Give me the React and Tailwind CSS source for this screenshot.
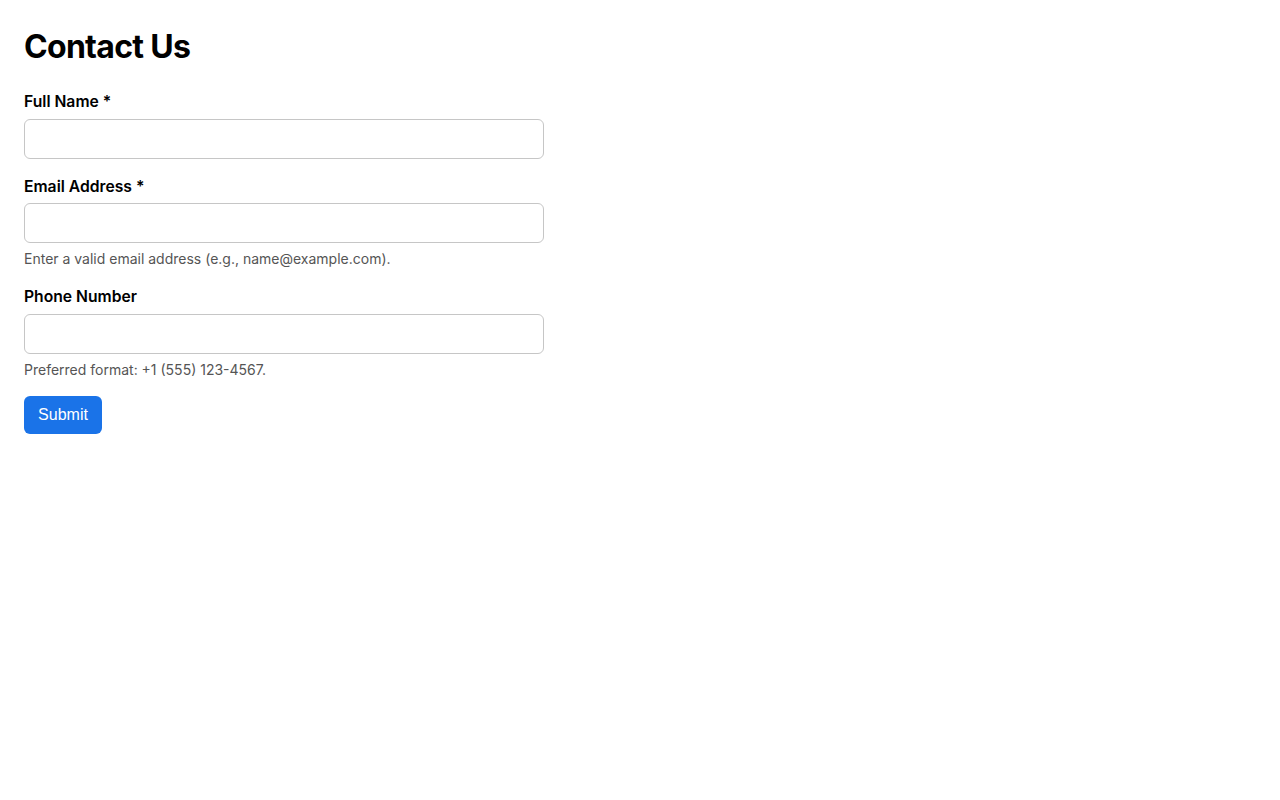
export default function App() {
  const font = { fontFamily: 'Inter, "Noto Sans", sans-serif' };
  return (
    <div className="min-h-screen bg-white px-6 pt-6 text-black" style={font}>
      <h1 className="mt-[3px] mb-6 text-[32px] leading-[40px] font-bold tracking-[-0.7px]">Contact Us</h1>
      <form className="flex w-[520px] flex-col" onSubmit={(e) => e.preventDefault()}>
        <div className="mb-4 flex flex-col">
          <label className="mb-1.5 text-[15.7px] leading-[22px] font-semibold">Full Name *</label>
          <input className="h-10 rounded-md border border-[#c6c6c6] px-3 text-[15px] outline-none" />
        </div>
        <div className="mb-4 flex flex-col">
          <label className="mt-px mb-[5px] text-[15.7px] leading-[22px] font-semibold">Email Address *</label>
          <input className="h-10 rounded-md border border-[#c6c6c6] px-3 text-[15px] outline-none" />
          <p className="mt-1.5 text-[14px] leading-5 text-[#555555]">Enter a valid email address (e.g., name@example.com).</p>
        </div>
        <div className="mb-4 flex flex-col">
          <label className="mt-px mb-[6px] text-[15.7px] leading-[22px] font-semibold">Phone Number</label>
          <input className="h-10 rounded-md border border-[#c6c6c6] px-3 text-[15px] outline-none" />
          <p className="mt-1.5 text-[14px] leading-5 text-[#555555]">Preferred format: +1 (555) 123-4567.</p>
        </div>
        <div>
          <button
            type="submit"
            className="h-[38px] w-[78px] rounded-md bg-[#1a73e8] text-[16px] text-white"
            style={{ fontFamily: '"Liberation Sans", Arial, sans-serif' }}
          >
            Submit
          </button>
        </div>
      </form>
    </div>
  );
}
